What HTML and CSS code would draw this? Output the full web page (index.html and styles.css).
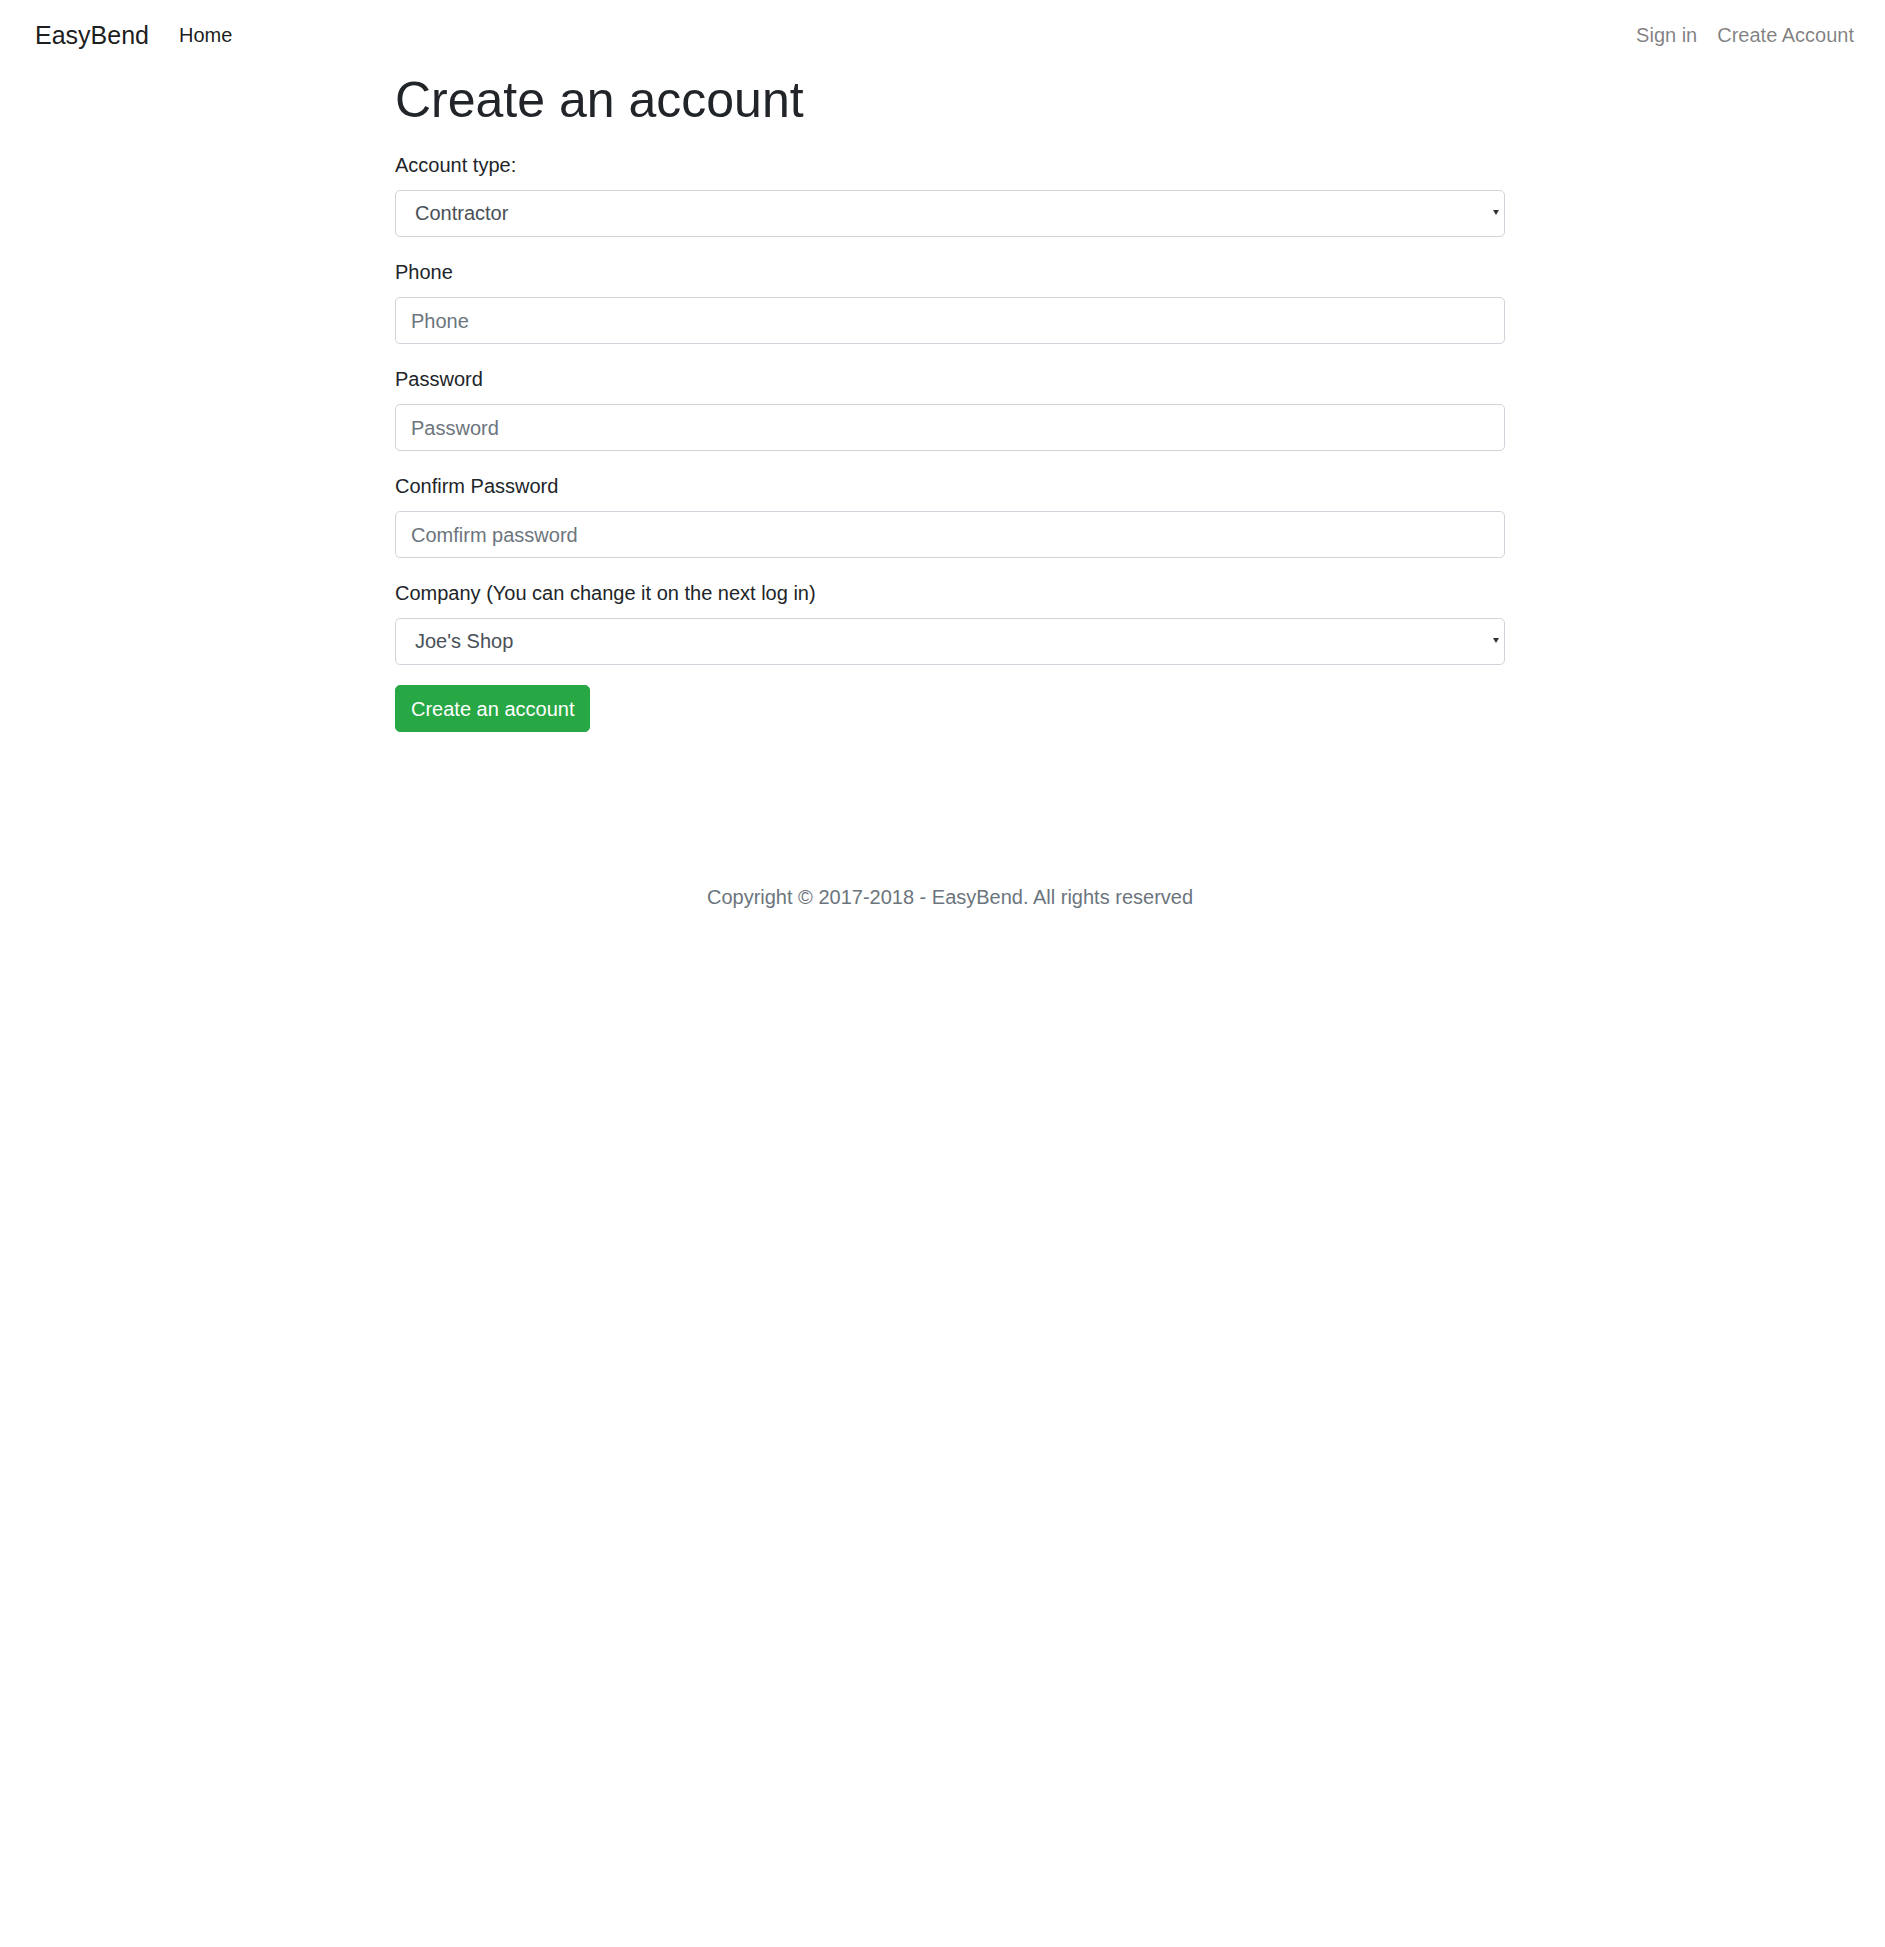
FILE: index.html
```html
<!DOCTYPE html>
<html lang="en">
<head>
<meta charset="utf-8">
<title>EasyBend - Create an account</title>
<link rel="stylesheet" href="styles.css">
</head>
<body>
<nav class="navbar">
  <div class="nav-left">
    <a class="brand" href="#">EasyBend</a>
    <a class="nav-link active" href="#">Home</a>
  </div>
  <div class="nav-right">
    <a class="nav-link" href="#">Sign in</a>
    <a class="nav-link" href="#">Create Account</a>
  </div>
</nav>
<main class="container">
  <h1 class="title">Create an account</h1>
  <form class="form">
    <div class="form-group">
      <label class="label" for="type">Account type:</label>
      <div class="select-wrap">
        <select id="type" class="form-control select">
          <option>Contractor</option>
          <option>Customer</option>
        </select>
      </div>
    </div>
    <div class="form-group">
      <label class="label" for="phone">Phone</label>
      <input id="phone" class="form-control input" type="text" placeholder="Phone">
    </div>
    <div class="form-group">
      <label class="label" for="pw">Password</label>
      <input id="pw" class="form-control input" type="password" placeholder="Password">
    </div>
    <div class="form-group">
      <label class="label" for="pw2">Confirm Password</label>
      <input id="pw2" class="form-control input" type="password" placeholder="Comfirm password">
    </div>
    <div class="form-group">
      <label class="label" for="company">Company (You can change it on the next log in)</label>
      <div class="select-wrap">
        <select id="company" class="form-control select">
          <option>Joe's Shop</option>
        </select>
      </div>
    </div>
    <button type="button" class="btn-success">Create an account</button>
  </form>
</main>
<footer class="footer">Copyright © 2017-2018 - EasyBend. All rights reserved</footer>
</body>
</html>
```

FILE: styles.css
```css
html { font-size: 20px; }
* { box-sizing: border-box; }
body {
  margin: 0;
  font-family: "Liberation Sans", Arial, sans-serif;
  font-size: 20px;
  line-height: 1.5;
  color: #212529;
  background: #fff;
}
a { text-decoration: none; }

.navbar {
  display: flex;
  justify-content: space-between;
  align-items: center;
  height: 70px;
  padding: 10px 21px 10px 35px;
}
.nav-left, .nav-right { display: flex; align-items: center; }
.brand {
  font-size: 25px;
  line-height: 37.5px;
  color: rgba(0,0,0,.9);
  margin-right: 20px;
  padding-top: 2px;
}
.nav-link {
  padding: 10px;
  line-height: 30px;
  color: rgba(0,0,0,.5);
}
.nav-link.active { color: rgba(0,0,0,.9); }

.container {
  width: 1110px;
  margin-left: 395px;
  padding-top: 0;
}
.title {
  margin: 0 0 20px;
  font-size: 50px;
  font-weight: 500;
  line-height: 1.2;
  color: #212529;
}
.form-group { margin-bottom: 20px; }
.label {
  display: inline-block;
  margin-bottom: 10px;
  line-height: 30px;
}
.form-control {
  display: block;
  width: 100%;
  height: 47px;
  padding: 7.5px 15px;
  font-family: inherit;
  font-size: 20px;
  line-height: 1.5;
  color: #495057;
  background: #fff;
  border: 1px solid #ced4da;
  border-radius: 5px;
  margin: 0;
}
.input { padding-top: 8.5px; padding-bottom: 6.5px; }
.form-control::placeholder { color: #6c757d; opacity: 1; }
.select {
  appearance: none;
  -webkit-appearance: none;
  padding: 6.5px 30px 8.5px 19px;
}
.select-wrap { position: relative; }
.select-wrap::after {
  content: "";
  position: absolute;
  right: 6px;
  top: 20px;
  width: 0;
  height: 0;
  border-left: 3.5px solid transparent;
  border-right: 3.5px solid transparent;
  border-top: 5px solid #333;
  pointer-events: none;
}
.btn-success {
  display: inline-block;
  height: 47px;
  padding: 7.5px 15px;
  font-family: inherit;
  font-size: 20px;
  line-height: 1.5;
  color: #fff;
  background: #28a745;
  border: 1px solid #28a745;
  border-radius: 5px;
}
.footer {
  width: 1110px;
  margin-left: 395px;
  margin-top: 150px;
  text-align: center;
  color: #6c757d;
  line-height: 30px;
}
```
